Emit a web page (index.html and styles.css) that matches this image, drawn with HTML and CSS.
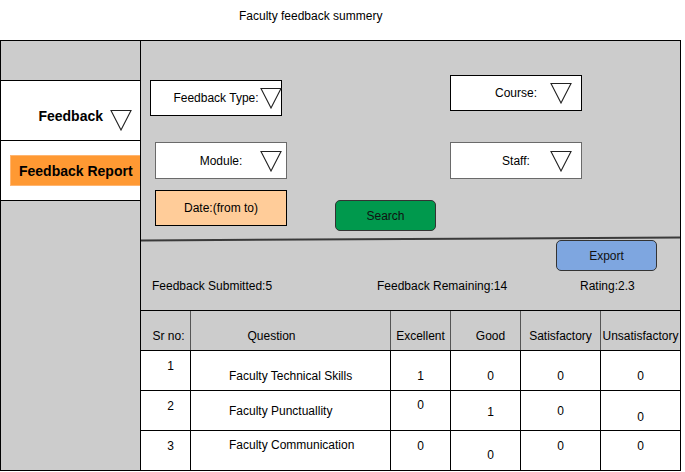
FILE: index.html
```html
<!DOCTYPE html>
<html>
<head>
<meta charset="utf-8">
<title>Faculty feedback summery</title>
<link rel="stylesheet" href="styles.css">
</head>
<body>
<div class="title">Faculty feedback summery</div>
<div class="frame">
  <aside class="sidebar">
    <div class="side-top"></div>
    <div class="nav nav-main">
      <span class="nav-label">Feedback</span>
      <svg class="tri nav-tri" width="22" height="22" viewBox="0 0 22 22"><polygon points="1,1.5 21,1.5 11,21" fill="#fff" stroke="#222" stroke-width="1.1"/></svg>
    </div>
    <div class="nav nav-sub">
      <div class="report">Feedback Report</div>
    </div>
  </aside>
  <main class="main">
    <section class="filters">
      <div class="frow r1">
        <div class="field f-type">Feedback Type:<svg class="tri" width="22" height="22" viewBox="0 0 22 22"><polygon points="1,1.5 21,1.5 11,21" fill="#fff" stroke="#222" stroke-width="1.1"/></svg></div>
        <div class="field f-course">Course:<svg class="tri" width="22" height="22" viewBox="0 0 22 22"><polygon points="1,1.5 21,1.5 11,21" fill="#fff" stroke="#222" stroke-width="1.1"/></svg></div>
      </div>
      <div class="frow r2">
        <div class="field f-module">Module:<svg class="tri" width="22" height="22" viewBox="0 0 22 22"><polygon points="1,1.5 21,1.5 11,21" fill="#fff" stroke="#222" stroke-width="1.1"/></svg></div>
        <div class="field f-staff">Staff:<svg class="tri" width="22" height="22" viewBox="0 0 22 22"><polygon points="1,1.5 21,1.5 11,21" fill="#fff" stroke="#222" stroke-width="1.1"/></svg></div>
      </div>
      <div class="frow r3">
        <div class="field f-date">Date:(from to)</div>
        <div class="btn search">Search</div>
      </div>
    </section>
    <div class="divider"></div>
    <section class="summary">
      <div class="export-row"><div class="btn export">Export</div></div>
      <div class="stats">
        <span>Feedback Submitted:5</span>
        <span>Feedback Remaining:14</span>
        <span>Rating:2.3</span>
      </div>
    </section>
    <div class="table">
      <div class="row head">
        <div class="cell c-sr">Sr no:</div>
        <div class="cell c-q">Question</div>
        <div class="cell">Excellent</div>
        <div class="cell c-good">Good</div>
        <div class="cell">Satisfactory</div>
        <div class="cell">Unsatisfactory</div>
      </div>
      <div class="row body">
        <div class="cell c-sr pt8">1</div>
        <div class="cell c-q pt18">Faculty Technical Skills</div>
        <div class="cell pt18">1</div>
        <div class="cell c-good pt18">0</div>
        <div class="cell pt18">0</div>
        <div class="cell pt18">0</div>
      </div>
      <div class="row body">
        <div class="cell c-sr pt8">2</div>
        <div class="cell c-q pt13">Faculty Punctuallity</div>
        <div class="cell pt7">0</div>
        <div class="cell c-good pt14">1</div>
        <div class="cell pt13">0</div>
        <div class="cell pt19">0</div>
      </div>
      <div class="row body">
        <div class="cell c-sr pt8">3</div>
        <div class="cell c-q pt7">Faculty Communication</div>
        <div class="cell pt8">0</div>
        <div class="cell c-good pt17">0</div>
        <div class="cell pt8">0</div>
        <div class="cell pt8">0</div>
      </div>
    </div>
  </main>
</div>
</body>
</html>
```
FILE: styles.css
```css
* { box-sizing: border-box; }
html, body { margin: 0; padding: 0; background: #fff; }
body {
  font-family: "Liberation Sans", Arial, sans-serif;
  font-size: 12px;
  line-height: 14px;
  color: #000;
  width: 685px;
  height: 472px;
  overflow: hidden;
}
.title {
  height: 40px;
  padding-top: 9px;
  padding-left: 239px;
}
.frame {
  width: 681px;
  height: 431px;
  border: 1px solid #000;
  display: grid;
  grid-template-columns: 140px 539px;
}
/* sidebar */
.sidebar {
  background: #ccc;
  border-right: 1px solid #000;
}
.side-top { height: 39px; }
.nav { background: #fff; border-top: 1px solid #000; }
.nav-main {
  height: 60px;
  display: flex;
  justify-content: flex-end;
  align-items: flex-start;
  padding-right: 8px;
}
.nav-label {
  font-weight: bold;
  font-size: 14px;
  line-height: 16px;
  margin-top: 27px;
  margin-right: 7px;
}
.nav-tri { margin-top: 28px; display: block; }
.nav-sub {
  height: 61px;
  border-bottom: 1px solid #000;
  padding-top: 14px;
}
.report {
  margin-left: 9px;
  height: 31px;
  background: #ff9933;
  border: 1px solid #ffb570;
  border-right: none;
  font-weight: bold;
  font-size: 14px;
  line-height: 30px;
  padding-left: 8px;
}
/* main */
.main { background: #ccc; display: flex; flex-direction: column; }
.filters { height: 197px; }
.frow { display: flex; align-items: flex-start; }
.r1 { padding-top: 34px; }
.r2 { margin-top: 26px; }
.r3 { margin-top: 11px; }
.field {
  position: relative;
  width: 132px;
  height: 36px;
  background: #fff;
  border: 1px solid #000;
  display: flex;
  align-items: center;
  justify-content: center;
}
.field .tri { position: absolute; }
.f-type { margin-left: 9px; margin-top: 5px; }
.f-type .tri { right: -1px; top: 6px; }
.f-course { margin-left: 168px; }
.f-course .tri { right: 9px; top: 6px; }
.f-module { margin-left: 14px; height: 37px; border-color: #6a6a6a; }
.f-module .tri { right: 4px; top: 7px; }
.f-staff { margin-left: 163px; height: 37px; border-color: #6a6a6a; }
.f-staff .tri { right: 9px; top: 7px; }
.f-date { margin-left: 14px; background: #ffcc99; }
.btn {
  width: 101px;
  height: 31px;
  border: 1px solid #333;
  border-radius: 5px;
  display: flex;
  align-items: center;
  justify-content: center;
  color: #111;
}
.search { margin-left: 48px; margin-top: 10px; background: #00994d; }
.divider {
  height: 2px;
  background: #3a3a3a;
  transform: rotate(-0.32deg);
}
.summary { height: 70px; }
.export-row { display: flex; justify-content: flex-end; padding-right: 23px; }
.export { background: #7ea6e0; }
.stats {
  margin-top: 8px;
  display: grid;
  grid-template-columns: 225px 203px 1fr;
  padding-left: 11px;
}
/* table */
.table { border-top: 1px solid #000; }
.row {
  display: grid;
  grid-template-columns: 49px 200px 60px 70px 80px 80px;
  height: 40px;
  border-bottom: 1px solid #000;
}
.row:last-child { border-bottom: none; height: 39px; }
.head { background: #ccc; }
.body { background: #fff; }
.cell { text-align: center; white-space: nowrap; }
.cell + .cell { border-left: 1px solid #000; }
.head .cell { padding-top: 18px; }
.head .cell + .cell { border-left-color: #555; }
.head .c-sr { padding-left: 6px; }
.head .c-q { padding-right: 38px; }
.c-good { padding-left: 10px; }
.body .c-sr { padding-left: 10px; }
.body .c-q { text-align: left; padding-left: 38px; }
.pt7 { padding-top: 7px; }
.pt8 { padding-top: 8px; }
.pt13 { padding-top: 13px; }
.pt14 { padding-top: 14px; }
.pt17 { padding-top: 17px; }
.pt18 { padding-top: 18px; }
.pt19 { padding-top: 19px; }
```
